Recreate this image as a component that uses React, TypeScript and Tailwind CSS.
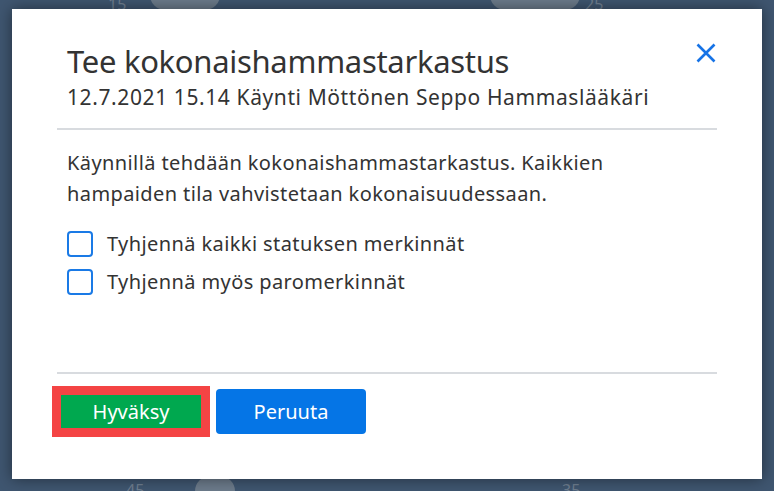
import React, { useState } from "react";

const font = { fontFamily: '"Noto Sans", "Open Sans", sans-serif' };

const Check = ({ label }: { label: string }) => {
    const [on, setOn] = useState(false);
    return (
        <label className="flex items-center gap-[14px] cursor-pointer">
            <button
                type="button"
                onClick={() => setOn((v) => !v)}
                className="w-[26px] h-[26px] rounded-[4px] border-2 border-[#1a7ae6] bg-white flex items-center justify-center"
            >
                {on && (
                    <svg width="16" height="16" viewBox="0 0 16 16">
                        <path d="M3 8.5l3.2 3L13 4.5" fill="none" stroke="#1a7ae6" strokeWidth="2.2" />
                    </svg>
                )}
            </button>
            <span className="text-[20px] leading-[26px] text-[#333] tracking-[0.4px]">{label}</span>
        </label>
    );
};

export default function App() {
    return (
        <div
            className="relative w-[774px] h-[491px] overflow-hidden bg-[#3f5670] pt-[9px] pl-[12px]"
            style={font}
        >
            {/* faint background chart behind the modal */}
            <span className="absolute left-[108px] top-[-8px] text-[16px] text-[#6f7f90]">15</span>
            <span className="absolute left-[585px] top-[-8px] text-[16px] text-[#6f7f90]">25</span>
            <span className="absolute left-[126px] top-[478px] text-[16px] text-[#6f7f90]">45</span>
            <span className="absolute left-[562px] top-[478px] text-[16px] text-[#6f7f90]">35</span>
            <div className="absolute left-[150px] top-[-20px] w-[70px] h-[30px] rounded-full bg-[#8b949c]/60" />
            <div className="absolute left-[490px] top-[-20px] w-[90px] h-[30px] rounded-full bg-[#8b949c]/60" />
            <div className="absolute left-[195px] top-[476px] w-[40px] h-[30px] rounded-full bg-[#8b949c]/60" />

            <div className="relative w-[750px] h-[470px] bg-white shadow-[0_0_14px_rgba(0,0,0,0.45)] px-[45px] flex flex-col">
                <div className="flex justify-between pl-[10px] pt-[33px] pb-[18px] border-b-2 border-[#d8dbdf]">
                    <div>
                        <h1 className="text-[31px] leading-[38px] text-[#333] tracking-[-0.3px]">
                            Tee kokonaishammastarkastus
                        </h1>
                        <p className="mt-[4px] text-[21px] leading-[26px] text-[#333] tracking-[0.6px]">
                            12.7.2021 15.14 Käynti Möttönen Seppo Hammaslääkäri
                        </p>
                    </div>
                    <button type="button" className="mt-[1px] mr-[1px] h-[20px] w-[20px]" aria-label="Sulje">
                        <svg width="20" height="20" viewBox="0 0 20 20">
                            <path d="M1.5 1.5l17 17M18.5 1.5l-17 17" stroke="#1673e6" strokeWidth="2.6" />
                        </svg>
                    </button>
                </div>

                <div className="flex-1 pl-[10px] pt-[17px] border-b-2 border-[#d8dbdf]">
                    <p className="text-[20px] leading-[31px] text-[#333] w-[580px] tracking-[0.4px]">
                        Käynnillä tehdään kokonaishammastarkastus. Kaikkien hampaiden tila vahvistetaan
                        kokonaisuudessaan.
                    </p>
                    <div className="mt-[22px] flex flex-col gap-[12px]">
                        <Check label="Tyhjennä kaikki statuksen merkinnät" />
                        <Check label="Tyhjennä myös paromerkinnät" />
                    </div>
                </div>

                <div className="h-[105px] flex items-start pt-[12px] -ml-[5px] gap-[6px]">
                    <button
                        type="button"
                        className="w-[158px] h-[51px] border-[9px] border-[#f44444] bg-[#00a84f] text-white text-[20px] leading-none"
                    >
                        Hyväksy
                    </button>
                    <button
                        type="button"
                        className="mt-[3px] w-[150px] h-[45px] rounded-[4px] bg-[#0575e6] text-white text-[20px] leading-none"
                    >
                        Peruuta
                    </button>
                </div>
            </div>
        </div>
    );
}
